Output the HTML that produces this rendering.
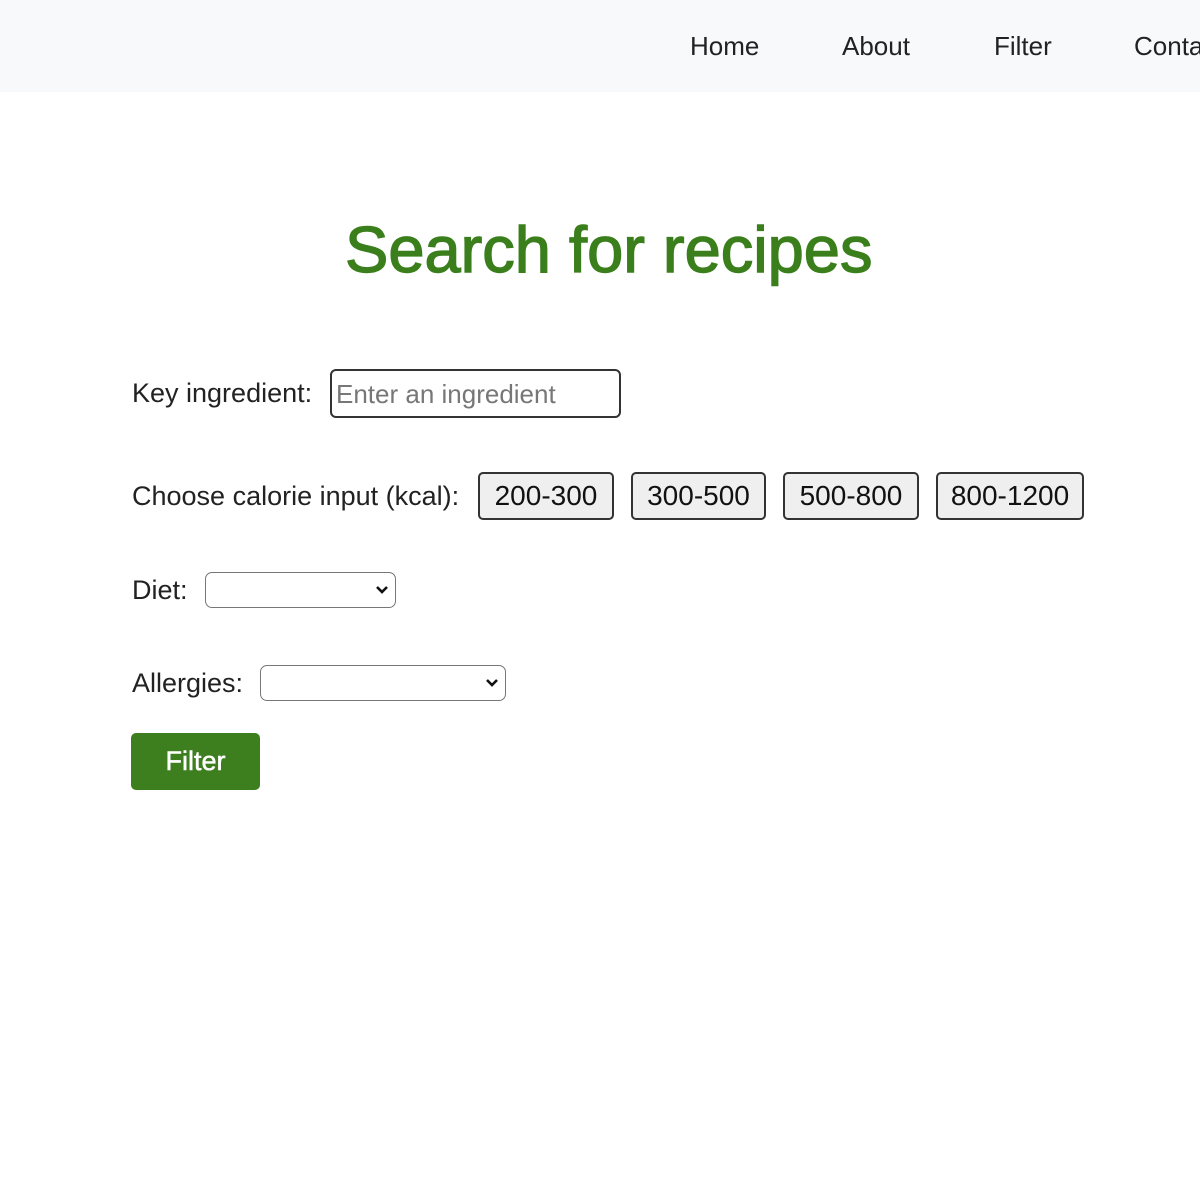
<!DOCTYPE html>
<html><head><meta charset="utf-8"><style>
body{margin:0;width:1200px;height:1200px;overflow:hidden;background:#fff;font-family:"Liberation Sans",Arial,sans-serif;color:#222;position:relative}
.nav{position:absolute;left:0;top:0;width:1200px;height:92px;background:#f8f9fa}
.a{position:absolute;white-space:nowrap}
.nav .a{top:31px;font-size:26px;color:#222}
h1{position:absolute;left:345px;top:212px;margin:0;font-size:65px;font-weight:normal;color:#3a7f1c;-webkit-text-stroke:1.4px #3a7f1c;white-space:nowrap}
.lbl{font-size:27px;color:#222}
.box{position:absolute;box-sizing:border-box;border:2px solid #333;border-radius:6px}
.btn{position:absolute;box-sizing:border-box;border:2px solid #333;border-radius:5px;background:#efefef;font-size:28px;text-align:center;line-height:44px;height:48px;top:472px;color:#111}
.sel{position:absolute;box-sizing:border-box;border:1.5px solid #777;border-radius:7px;height:36px;background:#fff}
.sel svg{position:absolute;right:6px;top:12px}
</style></head><body>
<div class="nav">
<span class="a" style="left:690px">Home</span>
<span class="a" style="left:842px">About</span>
<span class="a" style="left:994px">Filter</span>
<span class="a" style="left:1134px">Contact</span>
</div>
<h1>Search for recipes</h1>
<span class="a lbl" style="left:132px;top:378px">Key ingredient:</span>
<div class="box" style="left:330px;top:369px;width:291px;height:49px"></div>
<span class="a" style="left:336px;top:379px;font-size:26px;color:#777">Enter an ingredient</span>
<span class="a lbl" style="left:132px;top:481px">Choose calorie input (kcal):</span>
<div class="btn" style="left:478px;width:136px">200-300</div>
<div class="btn" style="left:631px;width:135px">300-500</div>
<div class="btn" style="left:783px;width:136px">500-800</div>
<div class="btn" style="left:936px;width:148px">800-1200</div>
<span class="a lbl" style="left:132px;top:575px">Diet:</span>
<div class="sel" style="left:205px;top:572px;width:191px"><svg width="14" height="10" viewBox="0 0 14 10"><path d="M2 2 L7 7 L12 2" stroke="#111" stroke-width="2.6" fill="none"/></svg></div>
<span class="a lbl" style="left:132px;top:668px">Allergies:</span>
<div class="sel" style="left:260px;top:665px;width:246px"><svg width="14" height="10" viewBox="0 0 14 10"><path d="M2 2 L7 7 L12 2" stroke="#111" stroke-width="2.6" fill="none"/></svg></div>
<div class="a" style="left:131px;top:733px;width:129px;height:57px;background:#3d7e1e;border-radius:5px;color:#fff;font-size:27px;text-align:center;line-height:57px;-webkit-text-stroke:0.5px #fff">Filter</div>
</body></html>
